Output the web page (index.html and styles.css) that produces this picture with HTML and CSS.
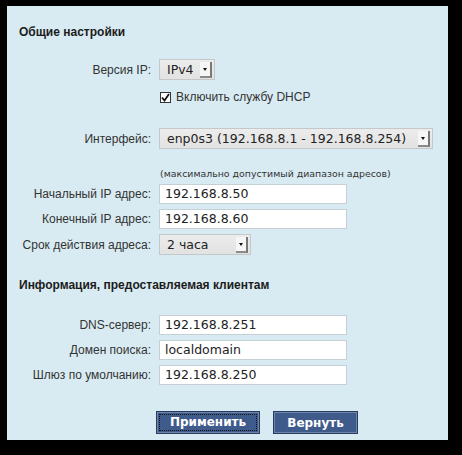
FILE: index.html
```html
<!DOCTYPE html>
<html>
<head lang="ru">
    <meta charset="UTF-8">
    <title>DHCP</title>
    <link rel="stylesheet" href="styles.css">
</head>
<body>
<div class="panel">
    <h2 class="section">Общие настройки</h2>

    <div class="row row-ipver">
        <label class="label">Версия IP:</label>
        <div class="select select-ipver"><span class="select-text">IPv4</span><span class="select-btn"></span></div>
    </div>

    <div class="row row-check">
        <span></span>
        <label class="check"><span class="check-box"><svg width="9" height="9" viewBox="0 0 9 9"><path d="M1 4.5 L3.5 7.5 L8 1" fill="none" stroke="#111" stroke-width="1.8"/></svg></span>Включить службу DHCP</label>
    </div>

    <div class="row row-iface">
        <label class="label">Интерфейс:</label>
        <div class="select select-iface"><span class="select-text">enp0s3 (192.168.8.1 - 192.168.8.254)</span><span class="select-btn"></span></div>
    </div>

    <div class="row row-hint">
        <span></span>
        <span class="hint">(максимально допустимый диапазон адресов)</span>
    </div>

    <div class="row row-field">
        <label class="label">Начальный IP адрес:</label>
        <div class="input">192.168.8.50</div>
    </div>
    <div class="row row-field">
        <label class="label">Конечный IP адрес:</label>
        <div class="input">192.168.8.60</div>
    </div>
    <div class="row row-field">
        <label class="label">Срок действия адреса:</label>
        <div class="select select-lease"><span class="select-text">2 часа</span><span class="select-btn"></span></div>
    </div>

    <h2 class="section section-2">Информация, предоставляемая клиентам</h2>

    <div class="row row-field row-dns">
        <label class="label">DNS-сервер:</label>
        <div class="input">192.168.8.251</div>
    </div>
    <div class="row row-field">
        <label class="label">Домен поиска:</label>
        <div class="input">localdomain</div>
    </div>
    <div class="row row-field">
        <label class="label">Шлюз по умолчанию:</label>
        <div class="input">192.168.8.250</div>
    </div>

    <div class="buttons">
        <button class="btn btn-apply"><span class="focus">Применить</span></button>
        <button class="btn btn-reset">Вернуть</button>
    </div>
</div>
</body>
</html>
```

FILE: styles.css
```css
* {
    margin: 0;
    padding: 0;
    box-sizing: border-box;
}
body {
    background: #000;
    font-family: "Liberation Sans", Arial, sans-serif;
    font-size: 12px;
    color: #333;
}
.panel {
    margin: 6px 0 0 7px;
    width: 441px;
    height: 434px;
    background: #d9ebf2;
    padding-top: 18px;
}
.section {
    font-size: 12px;
    font-weight: bold;
    line-height: 16px;
    color: #1c1c1c;
    margin-left: 12px;
}
.section-2 {
    margin-top: 22px;
}
.row {
    display: grid;
    grid-template-columns: 144px 1fr;
    column-gap: 8px;
    align-items: center;
}
.label {
    text-align: right;
    line-height: 14px;
    color: #333;
}
.row-ipver {
    margin-top: 19px;
}
.row-check {
    margin-top: 8px;
    height: 18px;
}
.row-iface {
    margin-top: 22px;
}
.row-hint {
    margin-top: 18px;
    height: 12px;
}
.row-field {
    margin-top: 5px;
}
.row-dns {
    margin-top: 22px;
}

.select {
    display: flex;
    align-items: center;
    justify-content: space-between;
    height: 21px;
    border: 1px solid #c4c8ca;
    background: linear-gradient(#ececec, #e2e2e2);
    padding: 0 2px 0 7px;
    font-family: "DejaVu Sans", sans-serif;
    font-size: 12.5px;
    color: #222;
}
.select-ipver {
    width: 56px;
}
.select-iface {
    width: 274px;
}
.select-lease {
    width: 92px;
}
.select-btn {
    width: 12px;
    height: 16px;
    background: #f6f6f6;
    border-right: 2px solid #777;
    border-bottom: 2px solid #8a8a8a;
    position: relative;
}
.select-btn::after {
    content: "";
    position: absolute;
    left: 3px;
    top: 6px;
    border-left: 2.5px solid transparent;
    border-right: 2.5px solid transparent;
    border-top: 3px solid #111;
}

.check {
    display: flex;
    align-items: center;
    gap: 5px;
    color: #333;
    margin-left: 1px;
}
.check-box {
    width: 11px;
    height: 11px;
    border: 1px solid #333;
    background: #fff;
    display: flex;
    align-items: center;
    justify-content: center;
}

.hint {
    font-family: "DejaVu Sans", sans-serif;
    font-size: 9.4px;
    color: #333;
    margin-left: 1px;
}

.input {
    width: 188px;
    height: 20px;
    background: #fff;
    border: 1px solid #c6d0d4;
    padding-left: 5px;
    font-family: "DejaVu Sans", sans-serif;
    font-size: 12.5px;
    line-height: 18px;
    color: #222;
}

.buttons {
    display: flex;
    gap: 13px;
    margin: 26px 0 0 149px;
}
.btn {
    height: 23px;
    background: #3f5b8b;
    border: 1px solid #283c60;
    box-shadow: inset 0 0 0 1px #6d84ab;
    color: #fff;
    font-family: "DejaVu Sans", sans-serif;
    font-weight: bold;
    font-size: 12px;
}
.btn-apply {
    width: 104px;
    padding: 3px;
}
.btn-apply .focus {
    display: block;
    height: 100%;
    line-height: 15px;
    outline: 1px dotted #111;
}
.btn-reset {
    width: 85px;
}
```
